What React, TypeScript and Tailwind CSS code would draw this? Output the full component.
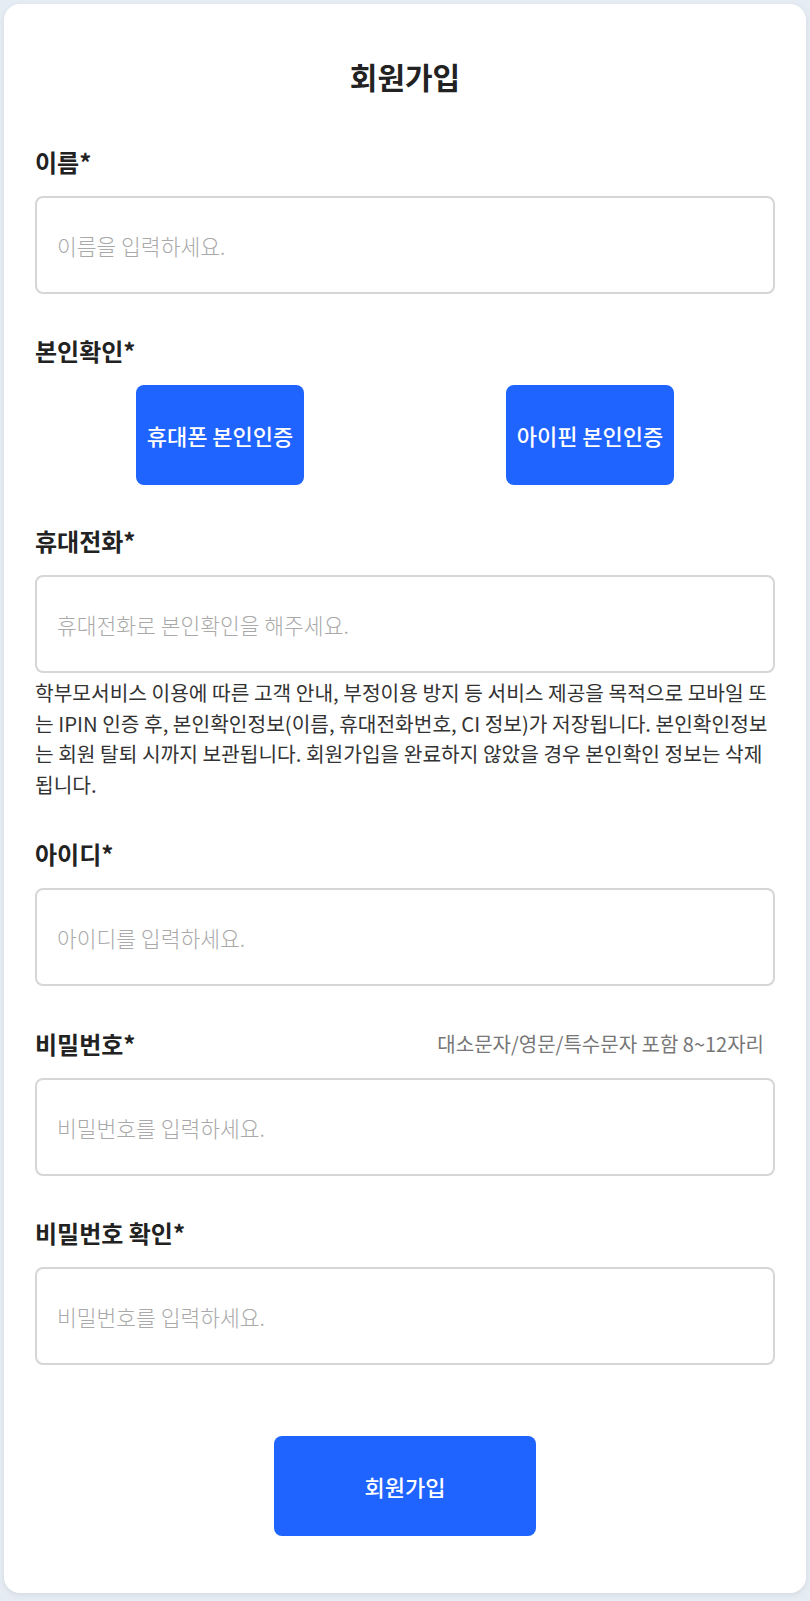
import React from "react";

const font = { fontFamily: '"Noto Sans CJK KR", "Noto Sans", sans-serif' };

function Label({ children, hint }: { children: React.ReactNode; hint?: string }) {
  return (
    <div className="flex items-center justify-between h-[28px] mb-5">
      <span className="text-[24px] leading-[28px] font-bold text-[#222]">{children}</span>
      {hint && <span className="text-[20px] leading-[28px] text-[#777] mr-[11px]">{hint}</span>}
    </div>
  );
}

function Input({ placeholder, type = "text" }: { placeholder: string; type?: string }) {
  return (
    <input
      type={type}
      placeholder={placeholder}
      className="block w-full h-[98px] rounded-lg border-2 border-[#d6d6d6] bg-white px-5 text-[21.5px] font-light text-[#222] placeholder:text-[#a9a9a9] outline-none"
      style={font}
    />
  );
}

export default function App() {
  return (
    <div className="min-h-screen bg-[#e6ecf3] p-1" style={font}>
      <div className="bg-white rounded-2xl shadow-[0_2px_6px_rgba(0,0,0,0.08)] px-[31px] pt-[52px] pb-[57px]">
        <h1 className="text-[30px] leading-[40px] font-bold text-center text-[#222]">회원가입</h1>

        <div className="mt-[52px]">
          <Label>이름*</Label>
          <Input placeholder="이름을 입력하세요." />
        </div>

        <div className="mt-[43px]">
          <Label>본인확인*</Label>
          <div className="grid grid-cols-2 justify-items-center">
            <button className="w-[168px] h-[100px] rounded-lg bg-[#1f64ff] text-white text-[22px] font-medium">
              휴대폰 본인인증
            </button>
            <button className="w-[168px] h-[100px] rounded-lg bg-[#1f64ff] text-white text-[22px] font-medium">
              아이핀 본인인증
            </button>
          </div>
        </div>

        <div className="mt-[42px]">
          <Label>휴대전화*</Label>
          <Input placeholder="휴대전화로 본인확인을 해주세요." />
          <p className="mt-[4px] text-[20.3px] leading-[30.5px] text-[#333]">
            학부모서비스 이용에 따른 고객 안내, 부정이용 방지 등 서비스 제공을 목적으로 모바일 또는 IPIN 인증 후, 본인확인정보(이름, 휴대전화번호, CI 정보)가 저장됩니다. 본인확인정보는 회원 탈퇴 시까지 보관됩니다. 회원가입을 완료하지 않았을 경우 본인확인 정보는 삭제됩니다.
          </p>
        </div>

        <div className="mt-[41px]">
          <Label>아이디*</Label>
          <Input placeholder="아이디를 입력하세요." />
        </div>

        <div className="mt-[44px]">
          <Label hint="대소문자/영문/특수문자 포함 8~12자리">비밀번호*</Label>
          <Input placeholder="비밀번호를 입력하세요." type="password" />
        </div>

        <div className="mt-[43px]">
          <Label>비밀번호 확인*</Label>
          <Input placeholder="비밀번호를 입력하세요." type="password" />
        </div>

        <div className="mt-[71px] flex justify-center">
          <button className="w-[262px] h-[100px] rounded-lg bg-[#1f64ff] text-white text-[22px] font-medium">
            회원가입
          </button>
        </div>
      </div>
    </div>
  );
}
